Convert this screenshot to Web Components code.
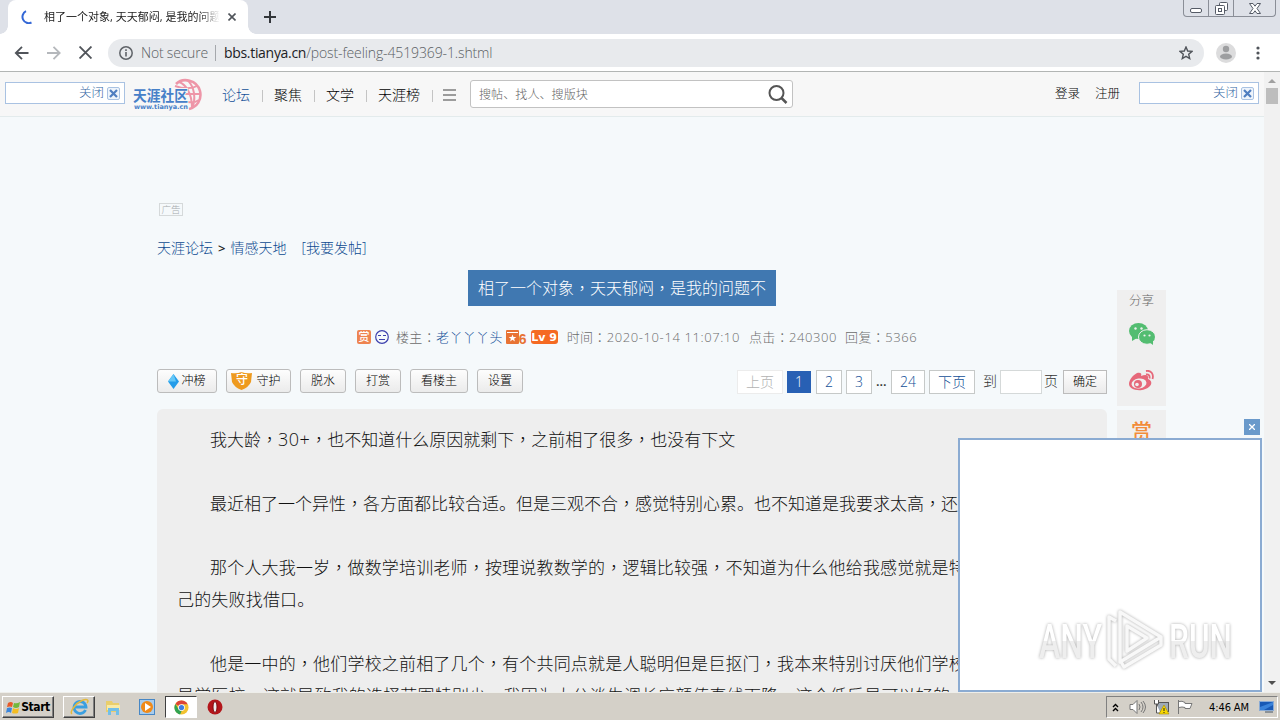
<!DOCTYPE html>
<html lang="zh-CN">
<head>
<meta charset="utf-8">
<title>相了一个对象，天天郁闷，是我的问题不</title>
<style>
html, body {
    margin: 0;
    height: 720px;
    overflow: hidden;
}
body {
    font-family: "Open Sans", "Noto Sans CJK SC", sans-serif;
    font-size: 14px;
    font-weight: 300;
    color: #222;
}
</style>
</head>
<body>
<desktop-screen></desktop-screen>
<script>
// clones the markup into an open shadow root
function define(name, html) {
    const template = document.createElement("template");
    // full-width commas and colons sit in the middle of their cell
    template.innerHTML = html.replace(/[，：]/g, `<span style="font-family:'Noto Sans CJK TC';line-height:0" lang="zh-TW">$&</span>`);
    customElements.define(name, class extends HTMLElement {
        constructor() {
            super();
            this.attachShadow({ mode: "open" });
            this.shadowRoot.appendChild(template.content.cloneNode(true));
        }
    });
}

/* ---------- browser window ---------- */

define("tab-strip", `
<style>
:host { display: flex; height: 34px; background: #dee1e8; justify-content: space-between; }
.left { display: flex; }
.tab { position: relative; box-sizing: border-box; width: 240px; height: 34px; margin-left: 8px; padding: 0 12px 0 12px; background: #fff; border-radius: 8px 8px 0 0; display: flex; align-items: center; }
.tab::before, .tab::after { content: ""; position: absolute; bottom: 0; width: 8px; height: 8px; }
.tab::before { left: -8px; background: radial-gradient(circle at 0 0, transparent 7.5px, #fff 8px); }
.tab::after { right: -8px; background: radial-gradient(circle at 100% 0, transparent 7.5px, #fff 8px); }
.title { width: 175px; margin: 0 9px 0 10px; overflow: hidden; white-space: nowrap; font-size: 11px; line-height: 20px; font-weight: 400; color: #222; -webkit-mask-image: linear-gradient(90deg, #000 155px, transparent 176px); }
.spin, .x, .plus { flex: none; display: block; }
.plus { margin: 11px 0 0 16px; }
.win { box-sizing: border-box; display: flex; width: 93px; height: 17px; margin-right: 4px; border: 1px solid #8a8e97; border-top: 0; border-radius: 0 0 4px 4px; }
.win span { display: flex; align-items: center; justify-content: center; width: 24px; border-right: 1px solid #8a8e97; }
.win span:last-child { width: 41px; border: 0; }
</style>
<div class="left">
  <div class="tab">
    <svg class="spin" width="14" height="14" viewBox="0 0 14 14"><path d="M6 1.2A6 6 0 0 0 11.5 12.5" fill="none" stroke="#3367d6" stroke-width="2"/></svg>
    <div class="title">相了一个对象, 天天郁闷, 是我的问题</div>
    <svg class="x" width="8" height="8" viewBox="0 0 8 8"><path d="M.5.5l7 7M7.500.5l-7 7" stroke="#50545a" stroke-width="1.6"/></svg>
  </div>
  <svg class="plus" width="12" height="12" viewBox="0 0 12 12"><path d="M6 0v12M0 6h12" stroke="#33363b" stroke-width="2"/></svg>
</div>
<div class="win">
  <span><svg width="12" height="10" viewBox="0 0 12 10"><rect x=".5" y="5.500" width="11" height="4" rx="1.500" fill="#fff" stroke="#555b66"/></svg></span>
  <span><svg width="13" height="13" viewBox="0 0 13 13" fill="#fff" stroke="#555b66"><rect x="4.500" y=".5" width="8" height="8" rx="1"/><rect x=".5" y="3.500" width="9" height="9" rx="1"/><rect x="3.500" y="6.500" width="3" height="3"/></svg></span>
  <span><svg width="12" height="11" viewBox="0 0 12 11"><path d="M.5.5h3.500l2 2.700 2-2.700h3.500L8 5.500l3.500 5H8L6 7.800l-2 2.700H.5L4 5.500z" fill="#fff" stroke="#555b66"/></svg></span>
</div>`);

define("address-bar", `
<style>
:host { box-sizing: border-box; display: flex; align-items: center; height: 38px; padding: 0 13px 0 14px; background: #fff; border-bottom: 1px solid #b2b5b4; }
svg { display: block; flex: none; }
.fwd { margin: 0 18px; }
.field { box-sizing: border-box; display: flex; align-items: center; width: 1096px; height: 28px; margin-left: 16px; padding: 0 11px; border-radius: 14px; background: #e8eaed; font-size: 14px; color: #5b5f64; }
.warn { margin-left: 8px; letter-spacing: -.2px; white-space: nowrap; }
.bar { width: 1px; height: 16px; margin: 0 8px 0 7px; background: #a5a8ac; }
.url { flex: 1; letter-spacing: -.12px; white-space: nowrap; }
b { font-weight: 400; color: #202124; letter-spacing: -.3px; }
.user { margin: 0 16px 0 12px; }
</style>
<svg width="15" height="14" viewBox="0 0 14 14"><path d="M14 7H1.500M7.500.8L1.300 7l6.200 6.200" fill="none" stroke="#50545a" stroke-width="1.800"/></svg>
<svg class="fwd" width="14" height="14" viewBox="0 0 14 14"><path d="M0 7h12.500M6.500.8L12.700 7l-6.200 6.200" fill="none" stroke="#b5b8bc" stroke-width="1.800"/></svg>
<svg width="13" height="13" viewBox="0 0 12 12"><path d="M.5.5l11 11M11.500.5l-11 11" stroke="#50545a" stroke-width="1.700"/></svg>
<div class="field">
  <svg width="14" height="14" viewBox="0 0 14 14"><circle cx="7" cy="7" r="6.200" fill="none" stroke="#5f6368" stroke-width="1.500"/><path d="M7 6v4.500M7 3.300v1.600" stroke="#5f6368" stroke-width="1.600"/></svg>
  <span class="warn">Not secure</span><span class="bar"></span>
  <span class="url"><b>bbs.tianya.cn</b>/post-feeling-4519369-1.shtml</span>
  <svg width="14" height="14" viewBox="0 0 14 14"><path d="M7 1l1.700 4 4.300.4-3.300 2.900 1 4.200L7 10.300l-3.700 2.200 1-4.200L1 5.400 5.300 5z" fill="none" stroke="#50545a" stroke-width="1.400"/></svg>
</div>
<svg class="user" width="20" height="20" viewBox="0 0 20 20"><circle cx="10" cy="10" r="10" fill="#dcdcdd"/><circle cx="10" cy="6" r="3.200" fill="#9d9ea0"/><ellipse cx="10" cy="13.500" rx="6" ry="3" fill="#9d9ea0"/></svg>
<svg width="13" height="14" viewBox="0 0 13 14" fill="#50545a"><circle cx="6" cy="2" r="1.600"/><circle cx="6" cy="7" r="1.600"/><circle cx="6" cy="12" r="1.600"/></svg>`);

define("scroll-bar", `
<style>
:host { display: flex; flex-direction: column; justify-content: space-between; align-items: center; width: 16px; height: 620px; background: #f1f1f1; }
.thumb { width: 12px; height: 16px; margin-top: 5px; background: #bdbdbd; }
svg { display: block; }
.top { margin: 7px auto 0; }
.end { margin-bottom: 7px; }
</style>
<div><svg class="top" width="8" height="4"><path d="M0 4l4-4 4 4z" fill="#a0a0a0"/></svg><div class="thumb"></div></div>
<svg class="end" width="8" height="4"><path d="M0 0l4 4 4-4z" fill="#505050"/></svg>`);

/* ---------- site header ---------- */

define("ad-strip", `
<style>
:host { box-sizing: border-box; display: flex; align-items: center; justify-content: flex-end; gap: 3px; width: 120px; height: 22px; padding-right: 4px; border: 1px solid #a9c2e2; background: #fff; color: #3465a4; font-size: 12.500px; line-height: 20px; }
svg { display: block; }
</style>
<slot></slot>
<svg width="13" height="13" viewBox="0 0 13 13"><rect x=".5" y=".5" width="12" height="12" rx="1.500" fill="#eef4fb" stroke="#a9c2e2"/><path d="M3 3l7 7M10 3l-7 7" stroke="#4f7ec0" stroke-width="2.200"/></svg>`);

define("tianya-logo", `
<style>:host { display: block; width: 70px; height: 34px; } svg { display: block; }</style>
<svg width="70" height="34" viewBox="0 0 70 34">
  <g fill="none" stroke="#ee96a8" stroke-width="2">
    <path d="M43 6C50-1 64 2 67 13c2 9-3 16-11 18" stroke-width="2.600"/>
    <path d="M46 4c6 2 13 10 13 26M54 2c4 3 10 12 6 27M42 8c8 3 17 3 22 0M52 16h16M55 24c5 1 8 0 11-2"/>
  </g>
  <text x="0" y="23" textLength="55" lengthAdjust="spacingAndGlyphs" font-family="Noto Sans CJK SC" font-weight="700" font-size="15" fill="#4680c8" stroke="#f7f7f7" stroke-width="2" paint-order="stroke">天涯社区</text>
  <text x="1" y="31" textLength="54" font-family="DejaVu Sans" font-weight="700" font-size="6.500" fill="#4680c8">www.tianya.cn</text>
</svg>`);

define("nav-link", `
<style>
:host { display: flex; align-items: center; font-size: 14px; line-height: 20px; color: #000; }
:host([active]) { color: #135098; }
i { width: 1px; height: 12px; margin: 1px 11px 0 12px; background: #c4c4c4; }
</style>
<slot></slot><i></i>`);

define("site-nav", `
<style>
:host { box-sizing: border-box; display: flex; align-items: flex-start; width: 1264px; height: 45px; padding: 0 5px; background: #f7f7f7; border-bottom: 1px solid #e3ebec; }
ad-strip { margin-top: 10px; }
tianya-logo { margin: 6px 19px 0 8px; }
nav { display: flex; margin-top: 13px; }
.menu { width: 13px; height: 2px; margin: 17px 0 0 -1px; border: solid #9c9c9c; border-width: 2px 0; padding: 3px 0; background: #9c9c9c content-box; }
.search { box-sizing: border-box; display: flex; align-items: center; justify-content: space-between; width: 323px; height: 28px; margin: 8px auto 0 14px; padding: 0 4px 0 8px; border: 1px solid #c2c2c2; border-radius: 3px; background: #fff; color: #666; font-size: 12.100px; }
.user { display: flex; gap: 15px; margin: 12px 19px 0 0; font-size: 12.500px; line-height: 20px; color: #000; }
</style>
<ad-strip>关闭</ad-strip>
<tianya-logo></tianya-logo>
<nav><nav-link active>论坛</nav-link><nav-link>聚焦</nav-link><nav-link>文学</nav-link><nav-link>天涯榜</nav-link></nav>
<div class="menu"></div>
<div class="search"><span>搜帖、找人、搜版块</span>
  <svg width="20" height="20" viewBox="0 0 20 20" fill="none" stroke="#555"><circle cx="8.500" cy="9" r="7" stroke-width="2"/><path d="M13.500 14l5 5" stroke-width="2.500"/></svg></div>
<div class="user"><span>登录</span><span>注册</span></div>
<ad-strip>关闭</ad-strip>`);

/* ---------- thread ---------- */

define("thread-meta", `
<style>
:host { display: flex; align-items: center; height: 20px; font-size: 13px; line-height: 20px; letter-spacing: .35px; color: #6c6c6c; white-space: nowrap; }
svg { display: block; flex: none; }
.shang { width: 14px; height: 14px; border-radius: 2px; background: #ee8450; color: #fff; font-size: 11px; line-height: 13px; font-weight: 500; letter-spacing: 0; text-align: center; }
.face { margin: 0 7px 0 4px; }
a { color: #135098; }
.star { margin-left: 3px; }
.six { color: #e87334; font: 700 14px/20px "Liberation Sans", sans-serif; margin: 4px 4px 0 0; letter-spacing: 0; }
.lv { width: 27px; height: 14px; margin-right: 9px; border-radius: 3px; background: #f56a22; color: #fff; font: 700 11px/15px "DejaVu Sans", sans-serif; text-align: center; letter-spacing: 0; }
.gap { margin-left: 9px; }
.num { letter-spacing: .6px; }
</style>
<span class="shang">赏</span>
<svg class="face" width="14" height="14" viewBox="0 0 14 14" fill="none" stroke="#3d40ad"><circle cx="7" cy="7" r="6.300" stroke-width="1.200"/><path d="M3 5.500h3M8 5.500h3M4 9.500h6"/></svg>
<span>楼主：<a>老丫丫丫头</a></span>
<svg class="star" width="13" height="14" viewBox="0 0 13 14"><rect width="13" height="14" rx="1" fill="#e87334"/><path d="M1 2.500h11" stroke="#fff"/><path d="M6.500 4.500l1 2.600h2.800L8.100 8.800l.8 2.700-2.400-1.700-2.400 1.700.8-2.700-2.200-1.700h2.800z" fill="#fff"/></svg>
<span class="six">6</span><span class="lv">Lv 9</span>
<span>时间：<span class="num">2020-10-14 11:07:10</span></span>
<span class="gap">点击：<span class="num">240300</span></span>
<span class="gap" style="margin-left:8px">回复：<span class="num">5366</span></span>`);

define("tool-button", `
<style>
:host { box-sizing: border-box; display: flex; align-items: center; justify-content: center; gap: 2px; height: 24px; padding: 0 10px; border: 1px solid #bcbcbc; border-radius: 3px; background: linear-gradient(#fdfdfd, #ebebeb); font-size: 12px; line-height: 20px; color: #000; white-space: nowrap; }
:host([square]) { border-radius: 0; }
</style>
<slot></slot>`);

define("page-link", `
<style>
:host { box-sizing: border-box; display: flex; align-items: center; justify-content: center; height: 24px; border: 1px solid #c6c9c8; background: #fff; color: #135098; font-size: 14px; }
:host([off]) { color: #b3b3b3; border-color: #ececec; }
:host([current]) { height: 22px; margin: 1px; border: 0; background: #2860b4; color: #fff; }
</style>
<slot></slot>`);

define("thread-bar", `
<style>
:host { display: flex; justify-content: space-between; align-items: flex-start; }
.tools { display: flex; gap: 9px; }
.pages { display: flex; align-items: center; margin-top: 1px; gap: 4px; font-size: 14px; line-height: 22px; color: #333; }
svg { display: block; }
.guard { position: relative; width: 21px; height: 18px; margin-left: -5px; }
.guard span { position: absolute; left: 4.500px; top: -2px; font-size: 12px; font-weight: 500; color: #fff; }
.dots { width: 11px; font-weight: 600; margin-top: -3px; font-size: 13px; }
.to { margin: -2px -1px 0 4px; }
.box { box-sizing: border-box; width: 42px; height: 24px; border: 1px solid #d5d9d9; background: #fff; }
.ye { margin: -2px 1px 0 -2px; }
</style>
<div class="tools">
  <tool-button style="width:60px;padding:0"><svg width="11" height="15" viewBox="0 0 11 15"><path d="M5.500 0L11 7.500 5.500 15 0 7.500z" fill="#249ce9"/><path d="M5.500 0L8 7.500H0z" fill="#65c8f8"/></svg><span>冲榜</span></tool-button>
  <tool-button style="width:65px;padding:0;gap:4px"><div class="guard"><svg width="21" height="18" viewBox="0 0 21 18"><path d="M0 1q6 1 10.500-1Q15 2 21 1l-1 9q-2 5-9.500 8Q3 15 1 10z" fill="#ee9a1f"/></svg><span>守</span></div><span>守护</span></tool-button>
  <tool-button>脱水</tool-button><tool-button>打赏</tool-button><tool-button>看楼主</tool-button><tool-button>设置</tool-button>
</div>
<div class="pages">
  <page-link off style="width:46px">上页</page-link>
  <page-link current style="width:24px;margin:1px 1px 1px 0">1</page-link>
  <page-link style="width:26px">2</page-link>
  <page-link style="width:26px">3</page-link>
  <span class="dots">...</span>
  <page-link style="width:34px">24</page-link>
  <page-link style="width:46px">下页</page-link>
  <span class="to">到</span><span class="box"></span><span class="ye">页</span>
  <tool-button square style="width:44px;padding:0">确定</tool-button>
</div>`);

define("post-body", `
<style>
:host { box-sizing: border-box; display: block; height: 283px; padding: 15px 20px 0; border-radius: 6px 6px 0 0; background: #eee; overflow: hidden; font-size: 17px; line-height: 32px; color: #111; white-space: nowrap; }
p { margin: 0 0 32px; text-indent: 33px; }
.wide { letter-spacing: .18px; }
.big { font-size: 18px; line-height: 0; letter-spacing: .5px; }
</style>
<p>我大龄，<span class="big">30+</span>，也不知道什么原因就剩下，之前相了很多，也没有下文</p>
<p>最近相了一个异性，各方面都比较合适。但是三观不合，感觉特别心累。也不知道是我要求太高，还</p>
<p class="wide">那个人大我一岁，做数学培训老师，按理说教数学的，逻辑比较强，不知道为什么他给我感觉就是特<br>己的失败找借口。</p>
<p class="wide">他是一中的，他们学校之前相了几个，有个共同点就是人聪明但是巨抠门，我本来特别讨厌他们学校<br>是学医校，这就导致我的选择范围特别少，我因为大公谈生调长应颜值直线下降，这个低后是可以好的</p>`);

define("share-rail", `
<style>
:host { display: flex; flex-direction: column; gap: 4px; width: 49px; }
div { box-sizing: border-box; display: flex; flex-direction: column; align-items: center; background: #efefef; }
.share { height: 116px; padding-top: 1px; font-size: 12.500px; line-height: 20px; color: #666; }
.reward { height: 60px; padding-top: 9px; font-size: 21px; line-height: 24px; font-weight: 500; color: #f28c3a; }
svg { display: block; }
.wx { margin-top: 12px; }
.wb { margin-top: 25px; }
</style>
<div class="share">分享
  <svg class="wx" width="26" height="22" viewBox="0 0 26 22" fill="#53bd71"><ellipse cx="9.500" cy="8" rx="9.500" ry="8"/><path d="M3 12v6l5-3z"/><ellipse cx="18" cy="14" rx="8.500" ry="7.300" stroke="#efefef"/><path d="M20 19l4 3v-5z"/><g fill="#efefef"><circle cx="6.500" cy="5.500" r="1.200"/><circle cx="12.500" cy="5.500" r="1.200"/><circle cx="15.500" cy="12.500" r="1.100"/><circle cx="20.500" cy="12.500" r="1.100"/></g></svg>
  <svg class="wb" width="26" height="21" viewBox="0 0 26 21"><path d="M8 3c4-1 5 1 4 3 5-2 8-1 7 3 7 3 2 10-6 11C6 21 0 18 0 14 0 10 4 5 8 3z" fill="#e6687a"/><ellipse cx="10" cy="13.500" rx="7.500" ry="5" fill="#efefef" transform="rotate(-8 10 13.500)"/><circle cx="9" cy="14" r="4" fill="#e6687a"/><circle cx="8" cy="14.500" r="1.800" fill="#efefef"/><path d="M17 1c5-1 8 3 6.500 8M17 4.500c3-.5 4 1.500 3.500 4" fill="none" stroke="#e6687a" stroke-width="1.800"/></svg>
</div>
<div class="reward">赏</div>`);

define("thread-page", `
<style>
:host { display: grid; grid-template-columns: 950px 49px; column-gap: 10px; height: 575px; padding-left: 157px; background: #f5f9fb; overflow: hidden; }
main { display: flex; flex-direction: column; }
.ad { box-sizing: border-box; width: 24px; height: 13px; margin: 86px 0 0 2px; border: 1px solid #d5d9da; font-size: 9.500px; line-height: 11px; text-align: center; color: #a5aaad; }
.crumbs { display: flex; height: 20px; margin-top: 22px; line-height: 20px; font-size: 14px; color: #0c4a90; white-space: pre; }
.crumbs b { margin: 0 5px 0 5px; font-size: 13px; font-weight: 600; color: #222; }
h1 { align-self: flex-start; box-sizing: border-box; width: 308px; height: 36px; margin: 12px 0 21px 311px; padding: 0 10px; background: #4078b1; color: #fff; font-size: 16px; font-weight: 300; line-height: 36px; white-space: nowrap; }
thread-meta { margin-left: 200px; }
thread-bar { margin: 22px 0 15px; }
share-rail { margin-top: 173px; }
</style>
<main>
  <div class="ad">广告</div>
  <div class="crumbs"><span>天涯论坛</span><b>&gt;</b><span>情感天地</span><span style="margin-left:15px">[我要发帖]</span></div>
  <h1>相了一个对象，天天郁闷，是我的问题不</h1>
  <thread-meta></thread-meta>
  <thread-bar></thread-bar>
  <post-body></post-body>
</main>
<share-rail></share-rail>`);

// floating ad window over the bottom right corner
define("ad-popup", `
<style>
:host { position: absolute; left: 958px; top: 419px; width: 304px; display: flex; flex-direction: column; align-items: flex-end; }
.close { display: flex; align-items: center; justify-content: center; width: 16px; height: 16px; margin: 0 2px 3px 0; background: #6a9acb; }
.frame { box-sizing: border-box; display: flex; align-items: flex-end; justify-content: flex-end; width: 304px; height: 254px; padding: 0 20px 15px 0; border: 2px solid #8babd2; background: #fff; }
svg { display: block; }
.mark { overflow: visible; filter: drop-shadow(0 0 1.500px #aaa); }
</style>
<div class="close"><svg width="6" height="6"><path d="M0 0l6 6M6 0L0 6" stroke="#fff" stroke-width="1.300"/></svg></div>
<div class="frame">
  <svg class="mark" width="204" height="66" viewBox="0 0 204 66">
    <defs><linearGradient id="g" x1="0" y1="0" x2="0" y2="1"><stop offset=".5" stop-color="#fff"/><stop offset=".5" stop-color="#eee"/></linearGradient></defs>
    <g font-family="Roboto, sans-serif" font-weight="500" font-size="49" fill="url(#g)">
      <text x="3" y="49" textLength="63" lengthAdjust="spacingAndGlyphs">ANY</text>
      <text x="133" y="49" textLength="63" lengthAdjust="spacingAndGlyphs">RUN</text>
    </g>
    <g fill="none" stroke="#f8f8f8" stroke-width="3.500" stroke-linejoin="round">
      <path d="M80 12L73 8v42l7 7M84 3l41 25-41 25zM84 51l4 7 37-22v-8M91 17l20 12-20 13z"/>
    </g>
  </svg>
</div>`);

/* ---------- windows taskbar ---------- */

define("task-button", `
<style>
:host { box-sizing: border-box; display: flex; align-items: center; justify-content: center; width: 32px; height: 22px; }
:host([raised]) { border: 1px solid; border-color: #fff #404040 #404040 #fff; box-shadow: inset -1px -1px #808080; }
:host([pressed]) { border: 1px solid; border-color: #404040 #fff #fff #404040; background: #fff; }
</style>
<slot></slot>`);

define("task-bar", `
<style>
:host { box-sizing: border-box; display: flex; align-items: center; height: 28px; padding: 1px 2px 0 2px; background: #d4d0c8; border-top: 1px solid #eeeeea; font: 11px "DejaVu Sans Condensed", "DejaVu Sans", sans-serif; color: #000; }
svg { display: block; flex: none; }
.start { width: 52px; gap: 0; margin-right: 9px; font-weight: 700; font-size: 12px; letter-spacing: -.4px; }
.tray { box-sizing: border-box; display: flex; align-items: center; width: 172px; height: 22px; margin-left: auto; padding: 0 2px 0 5px; border: 1px solid; border-color: #808080 #fff #fff #808080; }
.time { margin: 0 10px 0 15px; white-space: nowrap; letter-spacing: -.1px; }
</style>
<task-button class="start" raised>
  <svg width="15" height="15" viewBox="0 0 15 15"><path d="M2 3q3-2 5 0L6 7q-2-1-5 0z" fill="#e75a29"/><path d="M8 3q3 1 6-1l-1 5q-3 2-6 0z" fill="#73b83c"/><path d="M1 8q3-1 5 0l-1 5q-2-2-5 0z" fill="#3b86dc"/><path d="M7 8q3 2 6 0l-1 5q-3 1-6 0z" fill="#f4bd22"/></svg><span>Start</span>
</task-button>
<task-button raised>
  <svg width="19" height="18" viewBox="0 0 19 18" fill="none"><path d="M15.500 12a6 6 0 1 1 .5-3H5" stroke="#3a9fe0" stroke-width="2.800"/><path d="M2 16C-1 14 6 5 12 2.500S19 3 17 5" stroke="#e3b93c" stroke-width="1.500"/></svg>
</task-button>
<task-button style="margin-left:2px">
  <svg width="16" height="16" viewBox="0 0 16 16"><path d="M1 2h6l1 2h6v9H1z" fill="#e9ce6c"/><path d="M2 6h13v5H2z" fill="#f8eaa6"/><path d="M3 16V9h11v7h-3v-4H6v4z" fill="#72bfe8"/></svg>
</task-button>
<task-button style="margin-left:2px">
  <svg width="16" height="16" viewBox="0 0 16 16"><rect x=".5" y=".5" width="15" height="15" fill="#a8ccec" stroke="#4787c5"/><circle cx="8" cy="8" r="6" fill="#f08a18"/><path d="M6 4l6 4-6 4z" fill="#fff"/></svg>
</task-button>
<task-button pressed style="margin-left:2px">
  <svg width="15" height="15" viewBox="0 0 16 16"><circle cx="8" cy="8" r="7.500" fill="#f2c230"/><path d="M8 8L1.500 4.200A7.500 7.500 0 0 1 14.500 4.500H8z" fill="#dc4437"/><path d="M1.500 4.200L5 10l3 2-1.500 3.400A7.500 7.500 0 0 1 1.500 4.200z" fill="#31a352"/><circle cx="8" cy="8" r="3.600" fill="#fff"/><circle cx="8" cy="8" r="2.800" fill="#3f7de0"/></svg>
</task-button>
<task-button style="margin-left:2px">
  <svg width="16" height="16" viewBox="0 0 16 16"><circle cx="8" cy="8" r="7.500" fill="#b3161b"/><ellipse cx="8" cy="8" rx="2" ry="5.500" fill="#eee" stroke="#7d0b10"/></svg>
</task-button>
<div class="tray">
  <svg width="7" height="9" viewBox="0 0 7 9" fill="none" stroke="#000" stroke-width="1.400"><path d="M1 4l2.500-2.500L6 4M1 8l2.500-2.500L6 8"/></svg>
  <svg style="margin-left:10px" width="17" height="16" viewBox="0 0 17 16" fill="none" stroke="#777"><path d="M1 5.500h3l4-4v13l-4-4H1z" fill="#fff"/><path d="M10 5q2 3 0 6M12 3q4 5 0 10M14 2q5 6 0 12"/></svg>
  <svg style="margin-left:7px" width="17" height="16" viewBox="0 0 17 16"><rect x="4.500" y="3.500" width="11" height="9" fill="#9eaab7" stroke="#555"/><path d="M1.500 1v4h4V1M3.500 5v9h4" fill="#fff" stroke="#555"/><path d="M11 6l5 9H6z" fill="#f8d800" stroke="#a68a00" stroke-width=".6"/><path d="M11 9v3M11 13v1" stroke="#222"/></svg>
  <svg style="margin-left:7px" width="17" height="16" viewBox="0 0 17 16"><path d="M1.500 1v14M2 2.500q3-1 6 1v1h7l-2 5H8v-1q-3-1-6 0" fill="#fff" stroke="#777"/></svg>
  <span class="time">4:46 AM</span>
  <svg width="16" height="14" viewBox="0 0 16 14"><rect x=".5" y="1.500" width="14" height="9" fill="#1859b5" stroke="#8aabd5"/><path d="M1 7l13-5v3l-9 5H1z" fill="#3a83da"/><path d="M6 12h8" stroke="#456"/></svg>
</div>`);

define("desktop-screen", `
<style>
:host { position: relative; display: flex; flex-direction: column; width: 1280px; height: 720px; overflow: hidden; }
.view { display: flex; height: 620px; }
.page { width: 1264px; }
</style>
<tab-strip></tab-strip>
<address-bar></address-bar>
<div class="view">
  <div class="page"><site-nav></site-nav><thread-page></thread-page></div>
  <scroll-bar></scroll-bar>
</div>
<task-bar></task-bar>
<ad-popup></ad-popup>`);
</script>
</body>
</html>
